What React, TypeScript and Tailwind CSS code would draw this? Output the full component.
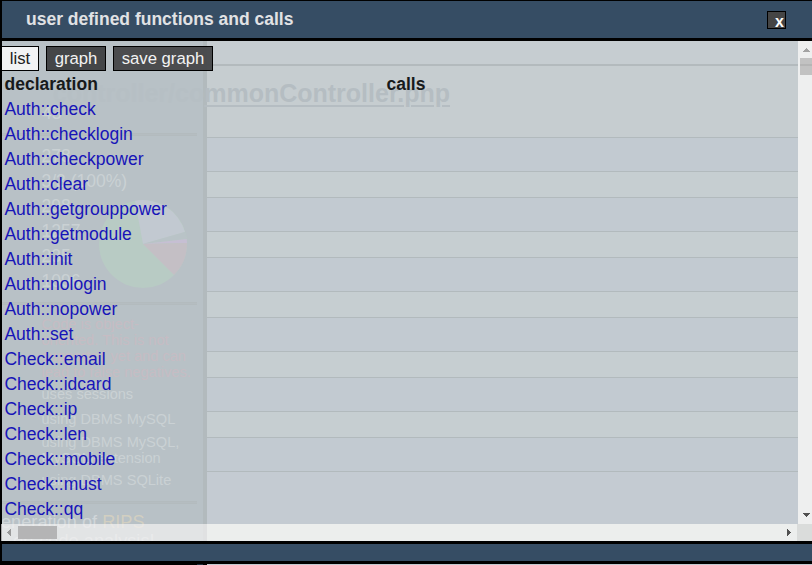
const names = [
  "Auth::check", "Auth::checklogin", "Auth::checkpower", "Auth::clear", "Auth::getgrouppower",
  "Auth::getmodule", "Auth::init", "Auth::nologin", "Auth::nopower", "Auth::set",
  "Check::email", "Check::idcard", "Check::ip", "Check::len", "Check::mobile", "Check::must", "Check::qq",
];

function Sidebar() {
  return (
    <div className="relative h-full w-[207px] shrink-0 overflow-hidden border-r-4 border-[#b2babd] bg-[#b8c1c6] text-[17.5px] leading-[25px] text-[#cad1d4]">
      <div className="flex h-[133px] flex-col pl-[82px] pt-[20px]">
        <span>12</span>
        <span className="-ml-[40px] mt-[56px]">43</span>
      </div>
      <div className="mr-1.5 h-[3px] border-y border-[#b3bbbe] bg-[#b5bdc1]" />
      <div className="flex h-[166px] flex-col pl-[41.5px] pt-[8px]">
        <span>278</span>
        <span>3/3 (100%)</span>
        <span>298</span>
        <span>1257</span>
        <span>235</span>
        <span>1096</span>
      </div>
      <svg className="absolute left-[99px] top-[199px]" width="90" height="90" viewBox="0 0 90 90">
        <circle cx="44" cy="45" r="44" fill="#b8cbc4" />
        <path d="M44 45 L36 1.8 A44 44 0 0 1 86 33 Z" fill="#c2c9d1" />
        <path d="M44 45 L86 33 A44 44 0 0 1 87.7 40 Z" fill="#b9c3c7" />
        <path d="M44 45 L87.7 40 A44 44 0 0 1 88 44 Z" fill="#c6bfd3" />
        <path d="M44 45 L88 44 A44 44 0 0 1 75 76 Z" fill="#c4bfc5" />
      </svg>
      <div className="mr-1.5 h-[3px] border-y border-[#b3bbbe] bg-[#b5bdc1]" />
      <div className="flex h-[196px] flex-col whitespace-pre pl-[41.5px] pt-[11px] text-[14.6px] leading-4">
        <div className="text-[#c6bcc3]">{"Code is object-\noriented. This is not\nsupported yet and can\nlead to false negatives."}</div>
        <span className="mt-[6px]">uses sessions</span>
        <span className="mt-[9px]">using DBMS MySQL</span>
        <span className="mt-[7px]">{"using DBMS MySQL,\nMySQLi-extension"}</span>
        <span className="mt-[6px]">using DBMS SQLite</span>
      </div>
      <div className="mr-1.5 h-[3px] border-y border-[#b3bbbe] bg-[#b5bdc1]" />
      <div className="flex flex-col whitespace-nowrap pt-[9px] text-[18.2px] leading-[19px] text-[#d0d6d9]">
        <span className="pl-[1px]">eneration of <span className="text-[#d2cfc1]">RIPS</span></span>
        <span className="pl-[13px]">ert code analysis!</span>
      </div>
    </div>
  );
}

function Page() {
  return (
    <div className="absolute inset-0 flex bg-[#c6cdd1]">
      <Sidebar />
      <div className="flex min-w-0 flex-1 flex-col">
        <div className="h-[66px] shrink-0 border-b-2 border-[#b3babd]" />
        <div className="flex h-[72px] shrink-0 border-b border-[#b2babd] bg-[#c6cdd0] pt-[13px]">
          <div className="relative flex w-[243px] justify-end whitespace-nowrap text-[25px] font-bold leading-[29px] text-[#b5bdc2]">
            <span className="text-[#b6bfc4]">controller/co</span>
            <span className="underline decoration-2 underline-offset-[3px]">mmonController.php</span>
          </div>
        </div>
        {[0, 1, 2, 3, 4, 5].map((i) => (
          <div key={i} className="shrink-0">
            <div className="h-[34px] border-b border-[#b2babd] bg-[#c2cad1]" />
            {i < 5 && <div className="h-[26px] border-b border-[#b2babd] bg-[#c6ced1]" />}
          </div>
        ))}
        <div className="flex-1 bg-[#c4cbd2]" />
      </div>
    </div>
  );
}

function Arrow({ points, color }: { points: string; color: string }) {
  return <svg width="8" height="8" viewBox="0 0 8 8" shapeRendering="crispEdges"><polygon points={points} fill={color} /></svg>;
}

function FunctionWindow() {
  return (
    <div className="relative flex h-[564px] flex-col border-l-2 border-t border-black">
      <div className="flex h-[40px] shrink-0 justify-between border-b-3 border-black bg-[#364d64] pl-6 pr-[26px] pt-[8px]">
        <span className="text-[17.5px] font-bold leading-5 text-[#e1e2e4]">user defined functions and calls</span>
        <button className="mt-[2px] flex h-[18px] w-[19px] justify-end border border-black bg-[#454545] pr-px pt-[2px] text-[16px] font-bold leading-[15px] text-white">x</button>
      </div>
      <div className="flex h-[483px] shrink-0">
        <div className="flex min-w-0 flex-1 flex-col overflow-hidden pt-[5px] text-[17.5px]">
          <div className="flex h-[25px] shrink-0 gap-[7px] text-[16.7px] leading-[23px] text-[#f3f3f3]">
            <button className="-ml-px w-[38px] border border-black bg-[#f2f3f4] text-[#222]">list</button>
            <button className="w-[60px] border border-black bg-[#444648]">graph</button>
            <button className="w-[100px] border border-black bg-[#444648]/95">save graph</button>
          </div>
          <div className="flex h-[25px] shrink-0 pl-[2.5px] font-bold leading-[26px] text-[#171a1b]">
            <span className="w-[382px]">declaration</span>
            <span>calls</span>
          </div>
          <div className="flex flex-col pl-[2.4px] pt-px leading-[25px] text-[#1714b8]">
            {names.map((name) => <a key={name} className="h-[25px] shrink-0">{name}</a>)}
          </div>
        </div>
        <div className="flex w-[14px] shrink-0 flex-col items-end bg-[#eeefef]">
          <div className="flex h-[17px] w-full items-center pl-[5px]"><Arrow points="0,6 7,6 3.5,2" color="#a3a3a3" /></div>
          <div className="h-[17px] w-3 bg-[#c2c2c2] pt-[6px]"><div className="h-[2px] bg-[#b5b5b5]" /></div>
          <div className="flex flex-1 items-end pb-[5px] pr-[1px]"><Arrow points="0,2 7,2 3.5,6" color="#505050" /></div>
        </div>
      </div>
      <div className="-ml-px flex h-[17px] shrink-0 items-center">
        <div className="flex h-full w-[206px] items-center bg-[#f4f2f2]/70 pl-[5px]">
          <Arrow points="5,0 5,7 1,3.5" color="#999" />
          <div className="ml-[4px] h-[13px] w-[39px] bg-[#b4b4b5]" />
        </div>
        <div className="flex h-full flex-1 items-center justify-end bg-[#eceeed] pr-[4px]"><Arrow points="2,0 2,7 6,3.5" color="#505050" /></div>
        <div className="h-full w-[15px] bg-[#dadcdb]" />
      </div>
      <div className="h-[23px] shrink-0 border-y-3 border-black bg-[#364d64]" />
    </div>
  );
}

export default function App() {
  return (
    <main className="relative h-[565px] w-[812px] overflow-hidden font-['Liberation_Sans',Arial,sans-serif]">
      <Page />
      <FunctionWindow />
      <div className="relative flex h-px">
        <div className="w-[197px] bg-black" />
        <div className="w-[6px] bg-[#20303f]" />
        <div className="w-[4px] bg-black" />
      </div>
    </main>
  );
}
